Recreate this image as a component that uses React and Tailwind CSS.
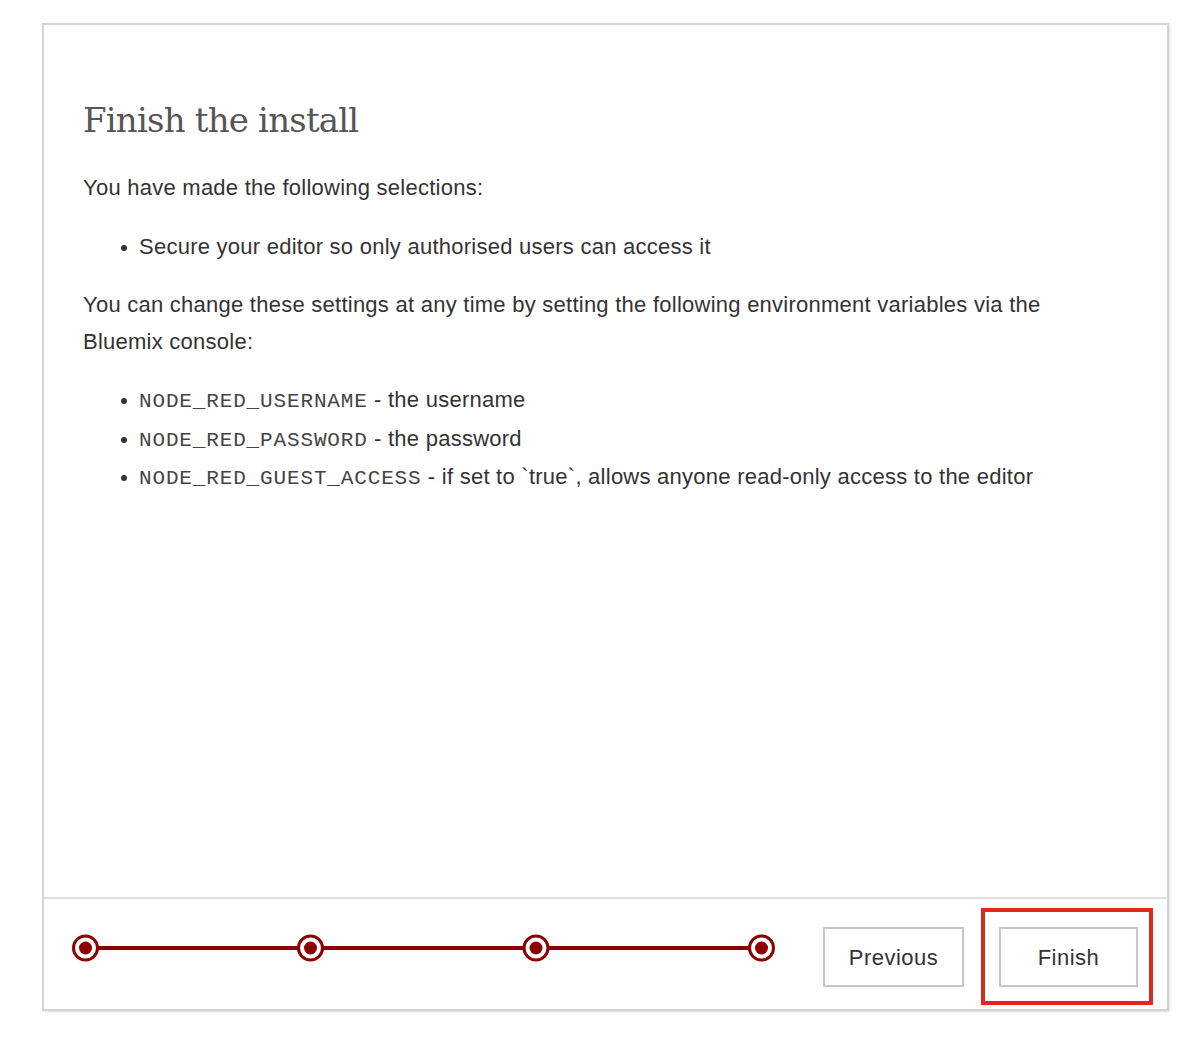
import React from 'react';

const sans = { fontFamily: '"Liberation Sans", Arial, sans-serif' };

const Dot = () => <span className="mt-[17px] mr-[12px] ml-[38px] h-[6px] w-[6px] shrink-0 rounded-full bg-[#333]" />;

const Code = ({ children }) => (
  <code
    className="text-[21px] leading-none tracking-[0.85px] text-[#444]"
    style={{ fontFamily: '"Liberation Mono", "Courier New", monospace' }}
  >
    {children}
  </code>
);

const Stepper = () => {
  const steps = [13.5, 238.5, 464, 689.5];
  return (
    <svg width="706" height="30" viewBox="0 0 706 30" className="mb-[12px] shrink-0">
      <line x1="13.5" y1="15" x2="689.5" y2="15" stroke="#8b0000" strokeWidth="4" />
      {steps.map((cx) => (
        <g key={cx}>
          <circle cx={cx} cy="15" r="12" fill="#fff" stroke="#8b0000" strokeWidth="3" />
          <circle cx={cx} cy="15" r="6.5" fill="#8b0000" />
        </g>
      ))}
    </svg>
  );
};

export default function App() {
  return (
    <div className="min-h-[1037px] w-[1200px] bg-white pt-[23px] pl-[42px]" style={sans}>
      <div className="flex h-[988px] w-[1127px] flex-col border-2 border-[#d4d4d4] bg-white shadow-[1px_1px_2px_rgba(0,0,0,0.12)]">
        {/* Step content */}
        <div className="flex-1 px-[39px] pt-[75px] text-[22px] leading-[37px] tracking-[0.25px] text-[#333]">
          <h1
            className="mb-[29px] text-[34px] leading-[40px] tracking-[-0.8px] text-[#555]"
            style={{ fontFamily: '"DejaVu Serif", "Liberation Serif", serif' }}
          >
            Finish the install
          </h1>
          <p className="mb-[22px]">You have made the following selections:</p>
          <ul className="mb-[21px]">
            <li className="flex">
              <Dot />
              Secure your editor so only authorised users can access it
            </li>
          </ul>
          <p className="mb-[21px]">
            You can change these settings at any time by setting the following environment variables via the
            <br />
            Bluemix console:
          </p>
          <ul className="leading-[38.5px]">
            <li className="flex h-[38.5px]">
              <Dot />
              <span>
                <Code>NODE_RED_USERNAME</Code> - the username
              </span>
            </li>
            <li className="flex h-[38.5px]">
              <Dot />
              <span>
                <Code>NODE_RED_PASSWORD</Code> - the password
              </span>
            </li>
            <li className="flex h-[38.5px]">
              <Dot />
              <span>
                <Code>NODE_RED_GUEST_ACCESS</Code> - if set to `true`, allows anyone read-only access to the editor
              </span>
            </li>
          </ul>
        </div>

        {/* Footer with stepper and navigation */}
        <div className="flex h-[112px] items-center border-t-2 border-[#dedede] pl-[28px] pr-[14px]">
          <Stepper />
          <button className="mt-[6px] ml-auto h-[60px] w-[141px] border-2 border-[#c6c6c6] bg-white text-[22px] tracking-[0.5px] text-[#333]">
            Previous
          </button>
          <div className="mt-[5px] ml-[17px] border-4 border-[#dd2a1b] pt-[15px] pb-[14px] pl-[14px] pr-[11px]">
            <button className="block h-[60px] w-[139px] border-2 border-[#c6c6c6] bg-white text-[22px] tracking-[0.5px] text-[#333]">
              Finish
            </button>
          </div>
        </div>
      </div>
    </div>
  );
}
